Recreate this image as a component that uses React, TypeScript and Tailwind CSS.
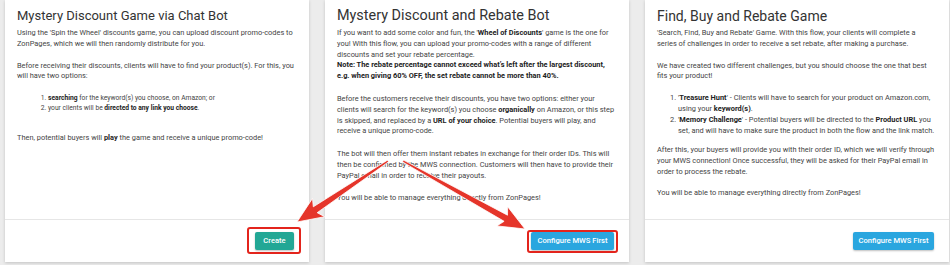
import React from "react";

function arrowPoints(
  x1: number, y1: number, x2: number, y2: number,
  wTail: number, wShaft: number, headW: number, headL: number
): string {
  const dx = x2 - x1, dy = y2 - y1;
  const L = Math.hypot(dx, dy);
  const ux = dx / L, uy = dy / L;
  const nx = -uy, ny = ux;
  const bx = x2 - ux * headL, by = y2 - uy * headL;
  const wx = bx - ux * 4, wy = by - uy * 4;
  const pts: [number, number][] = [
    [x1 + nx * wTail / 2, y1 + ny * wTail / 2],
    [bx + nx * wShaft / 2, by + ny * wShaft / 2],
    [wx + nx * headW / 2, wy + ny * headW / 2],
    [x2, y2],
    [wx - nx * headW / 2, wy - ny * headW / 2],
    [bx - nx * wShaft / 2, by - ny * wShaft / 2],
    [x1 - nx * wTail / 2, y1 - ny * wTail / 2],
  ];
  return pts.map((p) => `${p[0].toFixed(1)},${p[1].toFixed(1)}`).join(" ");
}

const body = "text-[7.4px] leading-[10.8px] text-[#444]";

function Card({
  title,
  titleSize,
  children,
  button,
}: {
  title: string;
  titleSize: string;
  children: React.ReactNode;
  button: React.ReactNode;
}) {
  return (
    <div className="w-[304px] h-[262px] bg-white shadow-[0_1px_3px_rgba(0,0,0,0.18)] flex flex-col">
      <div className="flex-1 px-[12px] pt-[6px]">
        <h2 className={`${titleSize} leading-[20px] text-[#333] font-normal whitespace-nowrap`}>{title}</h2>
        <div className={`mt-[2px] ${body}`}>{children}</div>
      </div>
      <div className="h-[43px] border-t border-[#e6e6e6] flex items-center justify-end pr-[15px]">
        {button}
      </div>
    </div>
  );
}

function Btn({
  label,
  color,
  boxed,
  w,
}: {
  label: string;
  color: string;
  boxed?: "a" | "b";
  w: string;
}) {
  return (
    <span className="relative inline-flex">
      <span
        className={`${w} h-[18px] ${color} text-white text-[7.6px] font-medium rounded-[2px] flex items-center justify-center shadow-[0_1px_2px_rgba(0,0,0,0.25)]`}
      >
        {label}
      </span>
      {boxed === "a" && (
        <span className="absolute left-[-8px] right-[-7px] top-[-5px] bottom-[-4px] border-2 border-[#e3241c] rounded-[3px]" />
      )}
      {boxed === "b" && (
        <span className="absolute left-[-4px] right-[-4px] top-[-2px] bottom-[-3px] border-2 border-[#e3241c] rounded-[3px]" />
      )}
    </span>
  );
}

const B = ({ children }: { children: React.ReactNode }) => (
  <b className="text-[#222] font-bold">{children}</b>
);

export default function App() {
  return (
    <div
      className="relative w-[950px] h-[265px] bg-[#ececec] overflow-hidden flex gap-[16px] pl-[5px]"
      style={{ fontFamily: "Roboto, 'Liberation Sans', sans-serif" }}
    >
      <Card
        title="Mystery Discount Game via Chat Bot"
        titleSize="text-[13px]"
        button={<Btn label="Create" color="bg-[#22a795]" boxed="a" w="w-[39px]" />}
      >
        <p className="mb-[11px]">
          Using the 'Spin the Wheel' discounts game, you can upload discount promo-codes to
          ZonPages, which we will then randomly distribute for you.
        </p>
        <p className="mb-[11px]">
          Before receiving their discounts, clients will have to find your product(s). For this, you
          will have two options:
        </p>
        <ol className="list-decimal pl-[31px] mb-[20px] text-[6.7px] leading-[10px]">
          <li>
            <B>searching</B> for the keyword(s) you choose, on Amazon; or
          </li>
          <li>
            your clients will be <B>directed to any link you choose</B>.
          </li>
        </ol>
        <p>
          Then, potential buyers will <B>play</B> the game and receive a unique promo-code!
        </p>
      </Card>

      <Card
        title="Mystery Discount and Rebate Bot"
        titleSize="text-[14.4px]"
        button={<Btn label="Configure MWS First" color="bg-[#2aa6df]" boxed="b" w="w-[83px]" />}
      >
        <p className="mb-[12px]">
          If you want to add some color and fun, the '<B>Wheel of Discounts</B>' game is the one for
          you! With this flow, you can upload your promo-codes with a range of different discounts
          and set your rebate percentage.
          <br />
          <B>
            Note: The rebate percentage cannot exceed what’s left after the largest discount, e.g.
            when giving 60% OFF, the set rebate cannot be more than 40%.
          </B>
        </p>
        <p className="mb-[12px]">
          Before the customers receive their discounts, you have two options: either your clients
          will search for the keyword(s) you choose <B>organically</B> on Amazon, or this step is
          skipped, and replaced by a <B>URL of your choice</B>. Potential buyers will play, and
          receive a unique promo-code.
        </p>
        <p className="mb-[11px]">
          The bot will then offer them instant rebates in exchange for their order IDs. This will
          then be confirmed by the MWS connection. Customers will then have to provide their PayPal
          email in order to receive their payouts.
        </p>
        <p>You will be able to manage everything directly from ZonPages!</p>
      </Card>

      <Card
        title="Find, Buy and Rebate Game"
        titleSize="text-[14px]"
        button={<Btn label="Configure MWS First" color="bg-[#2aa6df]" w="w-[81px]" />}
      >
        <p className="mb-[11px]">
          'Search, Find, Buy and Rebate' Game. With this flow, your clients will complete a series
          of challenges in order to receive a set rebate, after making a purchase.
        </p>
        <p className="mb-[11px]">
          We have created two different challenges, but you should choose the one that best fits
          your product!
        </p>
        <ol className="list-decimal pl-[21px] mb-[9px]">
          <li>
            '<B>Treasure Hunt</B>' - Clients will have to search for your product on Amazon.com,
            using your <B>keyword(s)</B>.
          </li>
          <li>
            '<B>Memory Challenge</B>' - Potential buyers will be directed to the <B>Product URL</B>{" "}
            you set, and will have to make sure the product in both the flow and the link match.
          </li>
        </ol>
        <p className="mb-[10px]">
          After this, your buyers will provide you with their order ID, which we will verify through
          your MWS connection! Once successful, they will be asked for their PayPal email in order
          to process the rebate.
        </p>
        <p>You will be able to manage everything directly from ZonPages!</p>
      </Card>

      <svg
        className="absolute left-0 top-0 pointer-events-none"
        width="950"
        height="265"
        viewBox="0 0 950 265"
      >
        <polygon
          points={arrowPoints(388, 161, 297, 222, 2, 7, 22, 22)}
          fill="#e5352a"
          stroke="#ffffff"
          strokeWidth="0.8"
          strokeLinejoin="round"
        />
        <polygon
          points={arrowPoints(403, 161, 525, 229, 2, 7, 22, 22)}
          fill="#e5352a"
          stroke="#ffffff"
          strokeWidth="0.8"
          strokeLinejoin="round"
        />
      </svg>
    </div>
  );
}
